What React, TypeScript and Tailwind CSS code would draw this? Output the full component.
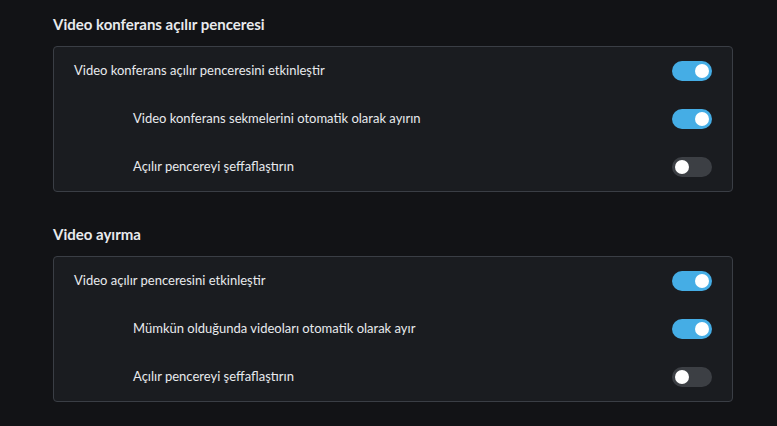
import { useState } from "react";

type Row = { label: string; indent?: boolean; on: boolean };

const sections: { title: string; rows: Row[] }[] = [
  {
    title: "Video konferans açılır penceresi",
    rows: [
      { label: "Video konferans açılır penceresini etkinleştir", on: true },
      { label: "Video konferans sekmelerini otomatik olarak ayırın", indent: true, on: true },
      { label: "Açılır pencereyi şeffaflaştırın", indent: true, on: false },
    ],
  },
  {
    title: "Video ayırma",
    rows: [
      { label: "Video açılır penceresini etkinleştir", on: true },
      { label: "Mümkün olduğunda videoları otomatik olarak ayır", indent: true, on: true },
      { label: "Açılır pencereyi şeffaflaştırın", indent: true, on: false },
    ],
  },
];

function Toggle({ initial }: { initial: boolean }) {
  const [on, setOn] = useState(initial);
  return (
    <button
      onClick={() => setOn(!on)}
      className={`flex h-[20px] w-[40px] items-center rounded-full px-[3px] ${
        on ? "justify-end bg-[#45ade5]" : "justify-start bg-[#3c3f44]"
      }`}
    >
      <span className="h-[14px] w-[14px] rounded-full bg-white" />
    </button>
  );
}

export default function App() {
  return (
    <div
      className="min-h-[426px] bg-[#121316] pl-[53px] pr-[44px] pt-[12px] text-[#e8eaed]"
      style={{ fontFamily: 'Lato, "Noto Sans", sans-serif' }}
    >
      {sections.map((s, i) => (
        <section key={s.title} className={i > 0 ? "mt-[30px]" : ""}>
          {/* TITLE */}
          <h2 className="mb-[10px] text-[15px] font-bold leading-[24px]">{s.title}</h2>

          {/* CARD */}
          <div className="rounded-[4px] border border-[#3a3e45] bg-[#1a1c20]">
            {s.rows.map((r) => (
              <div
                key={r.label}
                className={`flex h-[48px] items-center justify-between pr-[20px] text-[13px] ${
                  r.indent ? "pl-[79px]" : "pl-[20px]"
                }`}
              >
                <span>{r.label}</span>
                <Toggle initial={r.on} />
              </div>
            ))}
          </div>
        </section>
      ))}
    </div>
  );
}
